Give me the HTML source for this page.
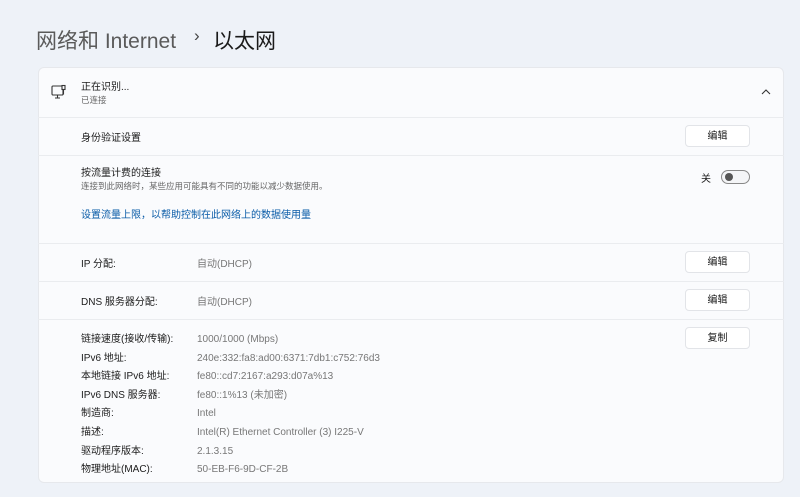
<!DOCTYPE html>
<html><head><meta charset="utf-8"><style>
body{margin:0;width:800px;height:497px;background:#eef2f8;font-family:"Liberation Sans","Noto Sans CJK SC",sans-serif;position:relative;overflow:hidden}
.a{position:absolute;white-space:nowrap}
.card{position:absolute;left:38px;top:67px;width:746px;height:416px;background:#fafbfd;border:1px solid #e6e8ec;border-radius:6px;box-sizing:border-box}
.ln{position:absolute;left:38px;width:746px;height:1px;background:#eaecef}
.btn{position:absolute;left:685px;width:65px;height:22px;background:#fff;border:1px solid #e2e4e8;border-radius:4px;box-sizing:border-box;font-size:10px;color:#1a1a1a;text-align:center;line-height:12px;padding-top:5px}
.t{font-size:10px;color:#1b1b1b;line-height:12px}
.s{font-size:8.5px;color:#666;line-height:10px}
.v{font-size:10px;color:#777;line-height:12px}
</style></head><body>
<div class="a" style="left:36px;top:25px;font-size:21px;color:#5a5a5a">网络和 Internet</div>
<div class="a" style="left:194px;top:26px;font-size:17px;color:#444">›</div>
<div class="a" style="left:213px;top:25px;font-size:21px;color:#1a1a1a">以太网</div>
<div class="card"></div>
<svg class="a" style="left:51px;top:84px" width="16" height="16" viewBox="0 0 16 16" fill="none" stroke="#333" stroke-width="1.1"><rect x="1" y="2" width="11" height="9" rx="1"/><path d="M4 14h5M6.5 11v3"/><rect x="11" y="1.5" width="3" height="4" fill="#fafbfd"/><path d="M12.5 5.5v5"/></svg>
<div class="a t" style="left:81px;top:82px">正在识别...</div>
<div class="a s" style="left:81px;top:95px">已连接</div>
<svg class="a" style="left:761px;top:88px" width="10" height="8" viewBox="0 0 10 8" fill="none" stroke="#333" stroke-width="1.1"><path d="M1 6l4-4 4 4"/></svg>
<div class="ln" style="top:117px"></div>
<div class="a t" style="left:81px;top:133px">身份验证设置</div>
<div class="btn" style="top:125px">编辑</div>
<div class="ln" style="top:155px"></div>
<div class="a t" style="left:81px;top:168px">按流量计费的连接</div>
<div class="a s" style="left:81px;top:181px">连接到此网络时，某些应用可能具有不同的功能以减少数据使用。</div>
<div class="a t" style="left:701px;top:174px">关</div>
<div class="a" style="left:721px;top:170px;width:29px;height:14px;border:1px solid #888;border-radius:8px;box-sizing:border-box;background:#f4f5f7"></div>
<div class="a" style="left:725px;top:173px;width:8px;height:8px;border-radius:50%;background:#555"></div>
<div class="a" style="left:81px;top:210px;font-size:10px;line-height:12px;color:#0a5ca8">设置流量上限，以帮助控制在此网络上的数据使用量</div>
<div class="ln" style="top:243px"></div>
<div class="a t" style="left:81px;top:259px">IP 分配:</div>
<div class="a v" style="left:197px;top:259px">自动(DHCP)</div>
<div class="btn" style="top:251px">编辑</div>
<div class="ln" style="top:281px"></div>
<div class="a t" style="left:81px;top:297px">DNS 服务器分配:</div>
<div class="a v" style="left:197px;top:297px">自动(DHCP)</div>
<div class="btn" style="top:289px">编辑</div>
<div class="ln" style="top:319px"></div>
<div class="btn" style="top:327px">复制</div>
<div class="a t" style="left:81px;top:331px;line-height:18.6px">链接速度(接收/传输):<br>IPv6 地址:<br>本地链接 IPv6 地址:<br>IPv6 DNS 服务器:<br>制造商:<br>描述:<br>驱动程序版本:<br>物理地址(MAC):</div>
<div class="a v" style="left:197px;top:331px;line-height:18.6px">1000/1000 (Mbps)<br>240e:332:fa8:ad00:6371:7db1:c752:76d3<br>fe80::cd7:2167:a293:d07a%13<br>fe80::1%13 (未加密)<br>Intel<br>Intel(R) Ethernet Controller (3) I225-V<br>2.1.3.15<br>50-EB-F6-9D-CF-2B</div>
</body></html>
